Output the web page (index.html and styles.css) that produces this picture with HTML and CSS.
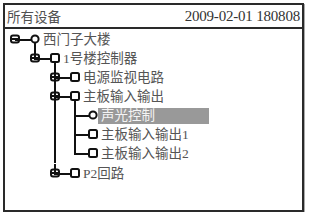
FILE: index.html
```html
<!DOCTYPE html>
<html lang="zh">
<head>
<meta charset="utf-8">
<title>所有设备</title>
<link rel="stylesheet" href="styles.css">
</head>
<body>
<div class="frame">
  <div class="header">
    <span class="title">所有设备</span>
    <span class="time">2009-02-01 180808</span>
  </div>
  <div class="tree">
    <div class="row">
      <span class="cell exp root"><svg class="ico" viewBox="0 0 10 10"><rect x="1" y="1.5" width="8" height="7" rx="2"/><line x1="1" y1="5" x2="9" y2="5"/></svg></span>
      <span class="icon kids"><svg class="ico" viewBox="0 0 10 10"><circle cx="5" cy="5" r="3.6"/></svg></span>
      <span class="label">西门子大楼</span>
    </div>
    <div class="row">
      <span class="cell"></span>
      <span class="cell exp last"><svg class="ico" viewBox="0 0 10 10"><rect x="1" y="1.5" width="8" height="7" rx="2"/><line x1="1" y1="5" x2="9" y2="5"/></svg></span>
      <span class="icon kids"><svg class="ico node" viewBox="0 0 10 10"><rect x="1" y="1" width="8" height="8" rx="1.5"/></svg></span>
      <span class="label">1号楼控制器</span>
    </div>
    <div class="row">
      <span class="cell"></span>
      <span class="cell"></span>
      <span class="cell exp mid"><svg class="ico" viewBox="0 0 10 10"><rect x="1" y="1.5" width="8" height="7" rx="2"/><line x1="1" y1="5" x2="9" y2="5"/></svg></span>
      <span class="icon"><svg class="ico node" viewBox="0 0 10 10"><rect x="1" y="1" width="8" height="8" rx="1.5"/></svg></span>
      <span class="label">电源监视电路</span>
    </div>
    <div class="row">
      <span class="cell"></span>
      <span class="cell"></span>
      <span class="cell exp mid"><svg class="ico" viewBox="0 0 10 10"><rect x="1" y="1.5" width="8" height="7" rx="2"/><line x1="1" y1="5" x2="9" y2="5"/></svg></span>
      <span class="icon kids"><svg class="ico node" viewBox="0 0 10 10"><rect x="1" y="1" width="8" height="8" rx="1.5"/></svg></span>
      <span class="label">主板输入输出</span>
    </div>
    <div class="row">
      <span class="cell"></span>
      <span class="cell"></span>
      <span class="cell line"></span>
      <span class="cell mid"></span>
      <span class="icon leaf"><svg class="ico node" viewBox="0 0 10 10"><circle cx="5" cy="5" r="3.6"/></svg></span>
      <span class="label sel">声光控制</span>
    </div>
    <div class="row">
      <span class="cell"></span>
      <span class="cell"></span>
      <span class="cell line"></span>
      <span class="cell mid"></span>
      <span class="icon leaf"><svg class="ico node" viewBox="0 0 10 10"><rect x="1" y="1" width="8" height="8" rx="1.5"/></svg></span>
      <span class="label">主板输入输出1</span>
    </div>
    <div class="row">
      <span class="cell"></span>
      <span class="cell"></span>
      <span class="cell line"></span>
      <span class="cell last"></span>
      <span class="icon leaf"><svg class="ico node" viewBox="0 0 10 10"><rect x="1" y="1" width="8" height="8" rx="1.5"/></svg></span>
      <span class="label">主板输入输出2</span>
    </div>
    <div class="row row-end">
      <span class="cell"></span>
      <span class="cell"></span>
      <span class="cell exp last"><svg class="ico" viewBox="0 0 10 10"><rect x="1" y="1.5" width="8" height="7" rx="2"/><line x1="1" y1="5" x2="9" y2="5"/></svg></span>
      <span class="icon"><svg class="ico node" viewBox="0 0 10 10"><rect x="1" y="1" width="8" height="8" rx="1.5"/></svg></span>
      <span class="label">P2回路</span>
    </div>
  </div>
</div>
</body>
</html>
```

FILE: styles.css
```css
html, body {
  margin: 0;
  padding: 0;
  background: #fff;
}

body {
  font-family: "Liberation Serif", "Noto Sans CJK SC", serif;
  color: #444;
}

.frame {
  box-sizing: border-box;
  margin: 3px 0 0 3px;
  width: 301px;
  height: 209px;
  border: 2px solid #2a2a2a;
  box-shadow: 1px 1px 0 #aaa;
  display: flex;
  flex-direction: column;
}

.header {
  height: 22px;
  display: flex;
  align-items: center;
  justify-content: space-between;
  padding: 0 2px 0 2px;
  border-bottom: 2px solid #2a2a2a;
  font-size: 13.5px;
  color: #505050;
  flex: none;
}

.time {
  font-size: 15px;
  letter-spacing: -0.2px;
  color: #333;
}

.tree {
  padding-top: 1px;
}

.row {
  display: flex;
  align-items: center;
  height: 19px;
}

.row-end {
  margin-top: 1px;
}

.cell {
  flex: none;
  width: 20px;
  height: 19px;
  display: flex;
  align-items: center;
  justify-content: center;
  background-repeat: no-repeat;
}

.line {
  background-image: linear-gradient(#111, #111);
  background-position: 9px 0;
  background-size: 2px 19px;
}

.mid {
  background-image: linear-gradient(#111, #111), linear-gradient(#111, #111);
  background-position: 9px 0, 10px 9px;
  background-size: 2px 19px, 10px 2px;
}

.last {
  background-image: linear-gradient(#111, #111), linear-gradient(#111, #111);
  background-position: 9px 0, 10px 9px;
  background-size: 2px 11px, 10px 2px;
}

.row-end .last {
  background-position: 9px -1px, 10px 9px;
  background-size: 2px 12px, 10px 2px;
}

.root {
  background-image: linear-gradient(#111, #111);
  background-position: 10px 9px;
  background-size: 10px 2px;
}

.icon {
  flex: none;
  width: 18px;
  height: 19px;
  display: flex;
  align-items: center;
  background-image: linear-gradient(#111, #111);
  background-repeat: no-repeat;
  background-position: 0 9px;
  background-size: 6px 2px;
}

.icon.kids {
  background-image: linear-gradient(#111, #111), linear-gradient(#111, #111);
  background-position: 0 9px, 9px 10px;
  background-size: 6px 2px, 2px 9px;
}

.ico {
  width: 10px;
  height: 10px;
  margin-top: -1px;
  fill: none;
  stroke: #111;
  stroke-width: 2;
}

.icon .ico {
  margin-left: 5px;
  fill: #fff;
}

.icon.leaf {
  width: 16px;
  background-size: 4px 2px;
}

.icon.leaf .ico {
  margin-left: 3px;
}

.label {
  font-size: 13.5px;
  line-height: 19px;
  white-space: nowrap;
  color: #555;
}

.sel {
  width: 108px;
  height: 16px;
  line-height: 16px;
  margin-left: -3px;
  padding-left: 3px;
  background: #999;
  color: #f4f4f4;
}
```
